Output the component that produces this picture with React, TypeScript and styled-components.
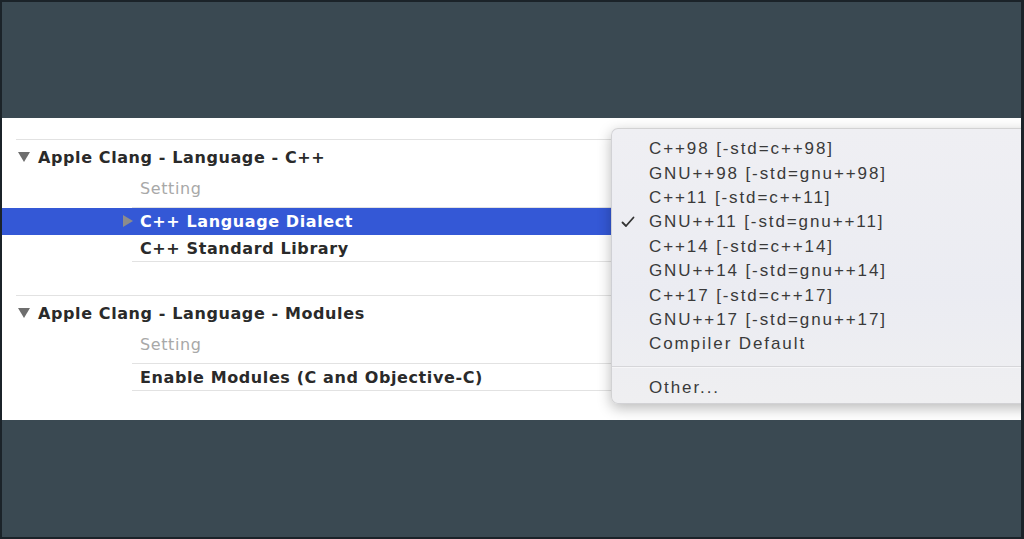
import React from 'react';
import styled, { createGlobalStyle } from 'styled-components';

const DIALECTS = [
  'C++98 [-std=c++98]',
  'GNU++98 [-std=gnu++98]',
  'C++11 [-std=c++11]',
  'GNU++11 [-std=gnu++11]',
  'C++14 [-std=c++14]',
  'GNU++14 [-std=gnu++14]',
  'C++17 [-std=c++17]',
  'GNU++17 [-std=gnu++17]',
  'Compiler Default',
];

const CHECKED = 'GNU++11 [-std=gnu++11]';

const GlobalStyle = createGlobalStyle`
  html, body {
    margin: 0;
    padding: 0;
    background: #3a4952;
  }
`;

function CheckMark() {
  return (
    <svg width="14" height="12" viewBox="0 0 14 12">
      <path d="M1.5 6.5 L5 10 L12.5 1.5" fill="none" stroke="#333" strokeWidth="1.8" strokeLinecap="round" strokeLinejoin="round" />
    </svg>
  );
}

function App() {
  return (
    <>
      <GlobalStyle />
      <Frame>
        <Band>
          <Group>
            <GroupHeader>
              <Disclosure />
              Apple Clang - Language - C++
            </GroupHeader>
            <Row>
              <Cell $head>Setting</Cell>
            </Row>
            <Row $selected>
              <RowArrow />
              <Cell $selected>C++ Language Dialect</Cell>
            </Row>
            <Row>
              <Cell>C++ Standard Library</Cell>
            </Row>
          </Group>

          <Group>
            <GroupHeader>
              <Disclosure />
              Apple Clang - Language - Modules
            </GroupHeader>
            <Row>
              <Cell $head>Setting</Cell>
            </Row>
            <Row>
              <Cell>Enable Modules (C and Objective-C)</Cell>
            </Row>
          </Group>

          <Menu>
            {DIALECTS.map((d) => (
              <MenuItem key={d}>
                <Check>{d === CHECKED && <CheckMark />}</Check>
                {d}
              </MenuItem>
            ))}
            <Separator />
            <MenuItem>
              <Check />
              Other...
            </MenuItem>
          </Menu>
        </Band>
      </Frame>
    </>
  );
}

export default App;

const Frame = styled.div`
  box-sizing: border-box;
  width: 1024px;
  height: 539px;
  background: #3a4952;
  border: 2px solid #1b2329;
  border-right-width: 3px;
  padding-top: 116px;
`;

const Band = styled.div`
  position: relative;
  height: 302px;
  background: #ffffff;
  overflow: hidden;
  padding-top: 21px;
  box-sizing: border-box;
  font-family: 'DejaVu Sans', sans-serif;
  font-weight: bold;
  font-size: 16px;
  letter-spacing: 0.6px;
  color: #2a2a2a;
`;

const Group = styled.div`
  margin-bottom: 33px;
`;

const GroupHeader = styled.div`
  display: flex;
  align-items: center;
  margin-left: 14px;
  height: 34px;
  padding-bottom: 2px;
  border-top: 1px solid #e2e2e2;
`;

const Disclosure = styled.span`
  width: 0;
  height: 0;
  margin: 0 8px 0 2px;
  border-left: 6.5px solid transparent;
  border-right: 6.5px solid transparent;
  border-top: 10px solid #6e6e6e;
`;

const Row = styled.div<{ $selected?: boolean }>`
  display: flex;
  align-items: stretch;
  padding-left: 130px;
  background: ${(p) => (p.$selected ? '#3458d6' : 'transparent')};
  position: relative;
`;

const RowArrow = styled.span`
  position: absolute;
  left: 121px;
  top: 7px;
  width: 0;
  height: 0;
  border-top: 6px solid transparent;
  border-bottom: 6px solid transparent;
  border-left: 10px solid #8c8c8c;
`;

const Cell = styled.div<{ $head?: boolean; $selected?: boolean }>`
  flex: 1;
  display: flex;
  align-items: center;
  padding-left: 8px;
  height: ${(p) => (p.$head ? '24px' : '26px')};
  padding-bottom: ${(p) => (p.$head ? '7px' : '0')};
  border-bottom: 1px solid ${(p) => (p.$selected ? '#3458d6' : '#e2e2e2')};
  color: ${(p) => (p.$selected ? '#ffffff' : p.$head ? '#a8a8a8' : '#2a2a2a')};
  font-weight: ${(p) => (p.$head ? 'normal' : 'bold')};
`;

const Menu = styled.div`
  position: absolute;
  top: 10px;
  left: 609px;
  width: 440px;
  height: 276px;
  box-sizing: border-box;
  padding-top: 8px;
  border-radius: 7px;
  border: 1px solid rgba(0, 0, 0, 0.12);
  background: linear-gradient(#efeff3, #ebecf2 60%, #efeff1);
  box-shadow: 0 4px 14px rgba(0, 0, 0, 0.28);
  font-family: 'Liberation Sans', Arial, sans-serif;
  font-weight: normal;
  font-size: 17px;
  letter-spacing: 1.9px;
  color: #3a3a3a;
`;

const MenuItem = styled.div`
  display: flex;
  align-items: center;
  height: 24.4px;
`;

const Check = styled.span`
  display: flex;
  align-items: center;
  width: 37px;
  padding-left: 9px;
  box-sizing: border-box;
`;

const Separator = styled.div`
  height: 1px;
  margin: 9px 0 9px;
  background: #d6d6d9;
  box-shadow: 0 1px 0 #f6f6f8;
`;
